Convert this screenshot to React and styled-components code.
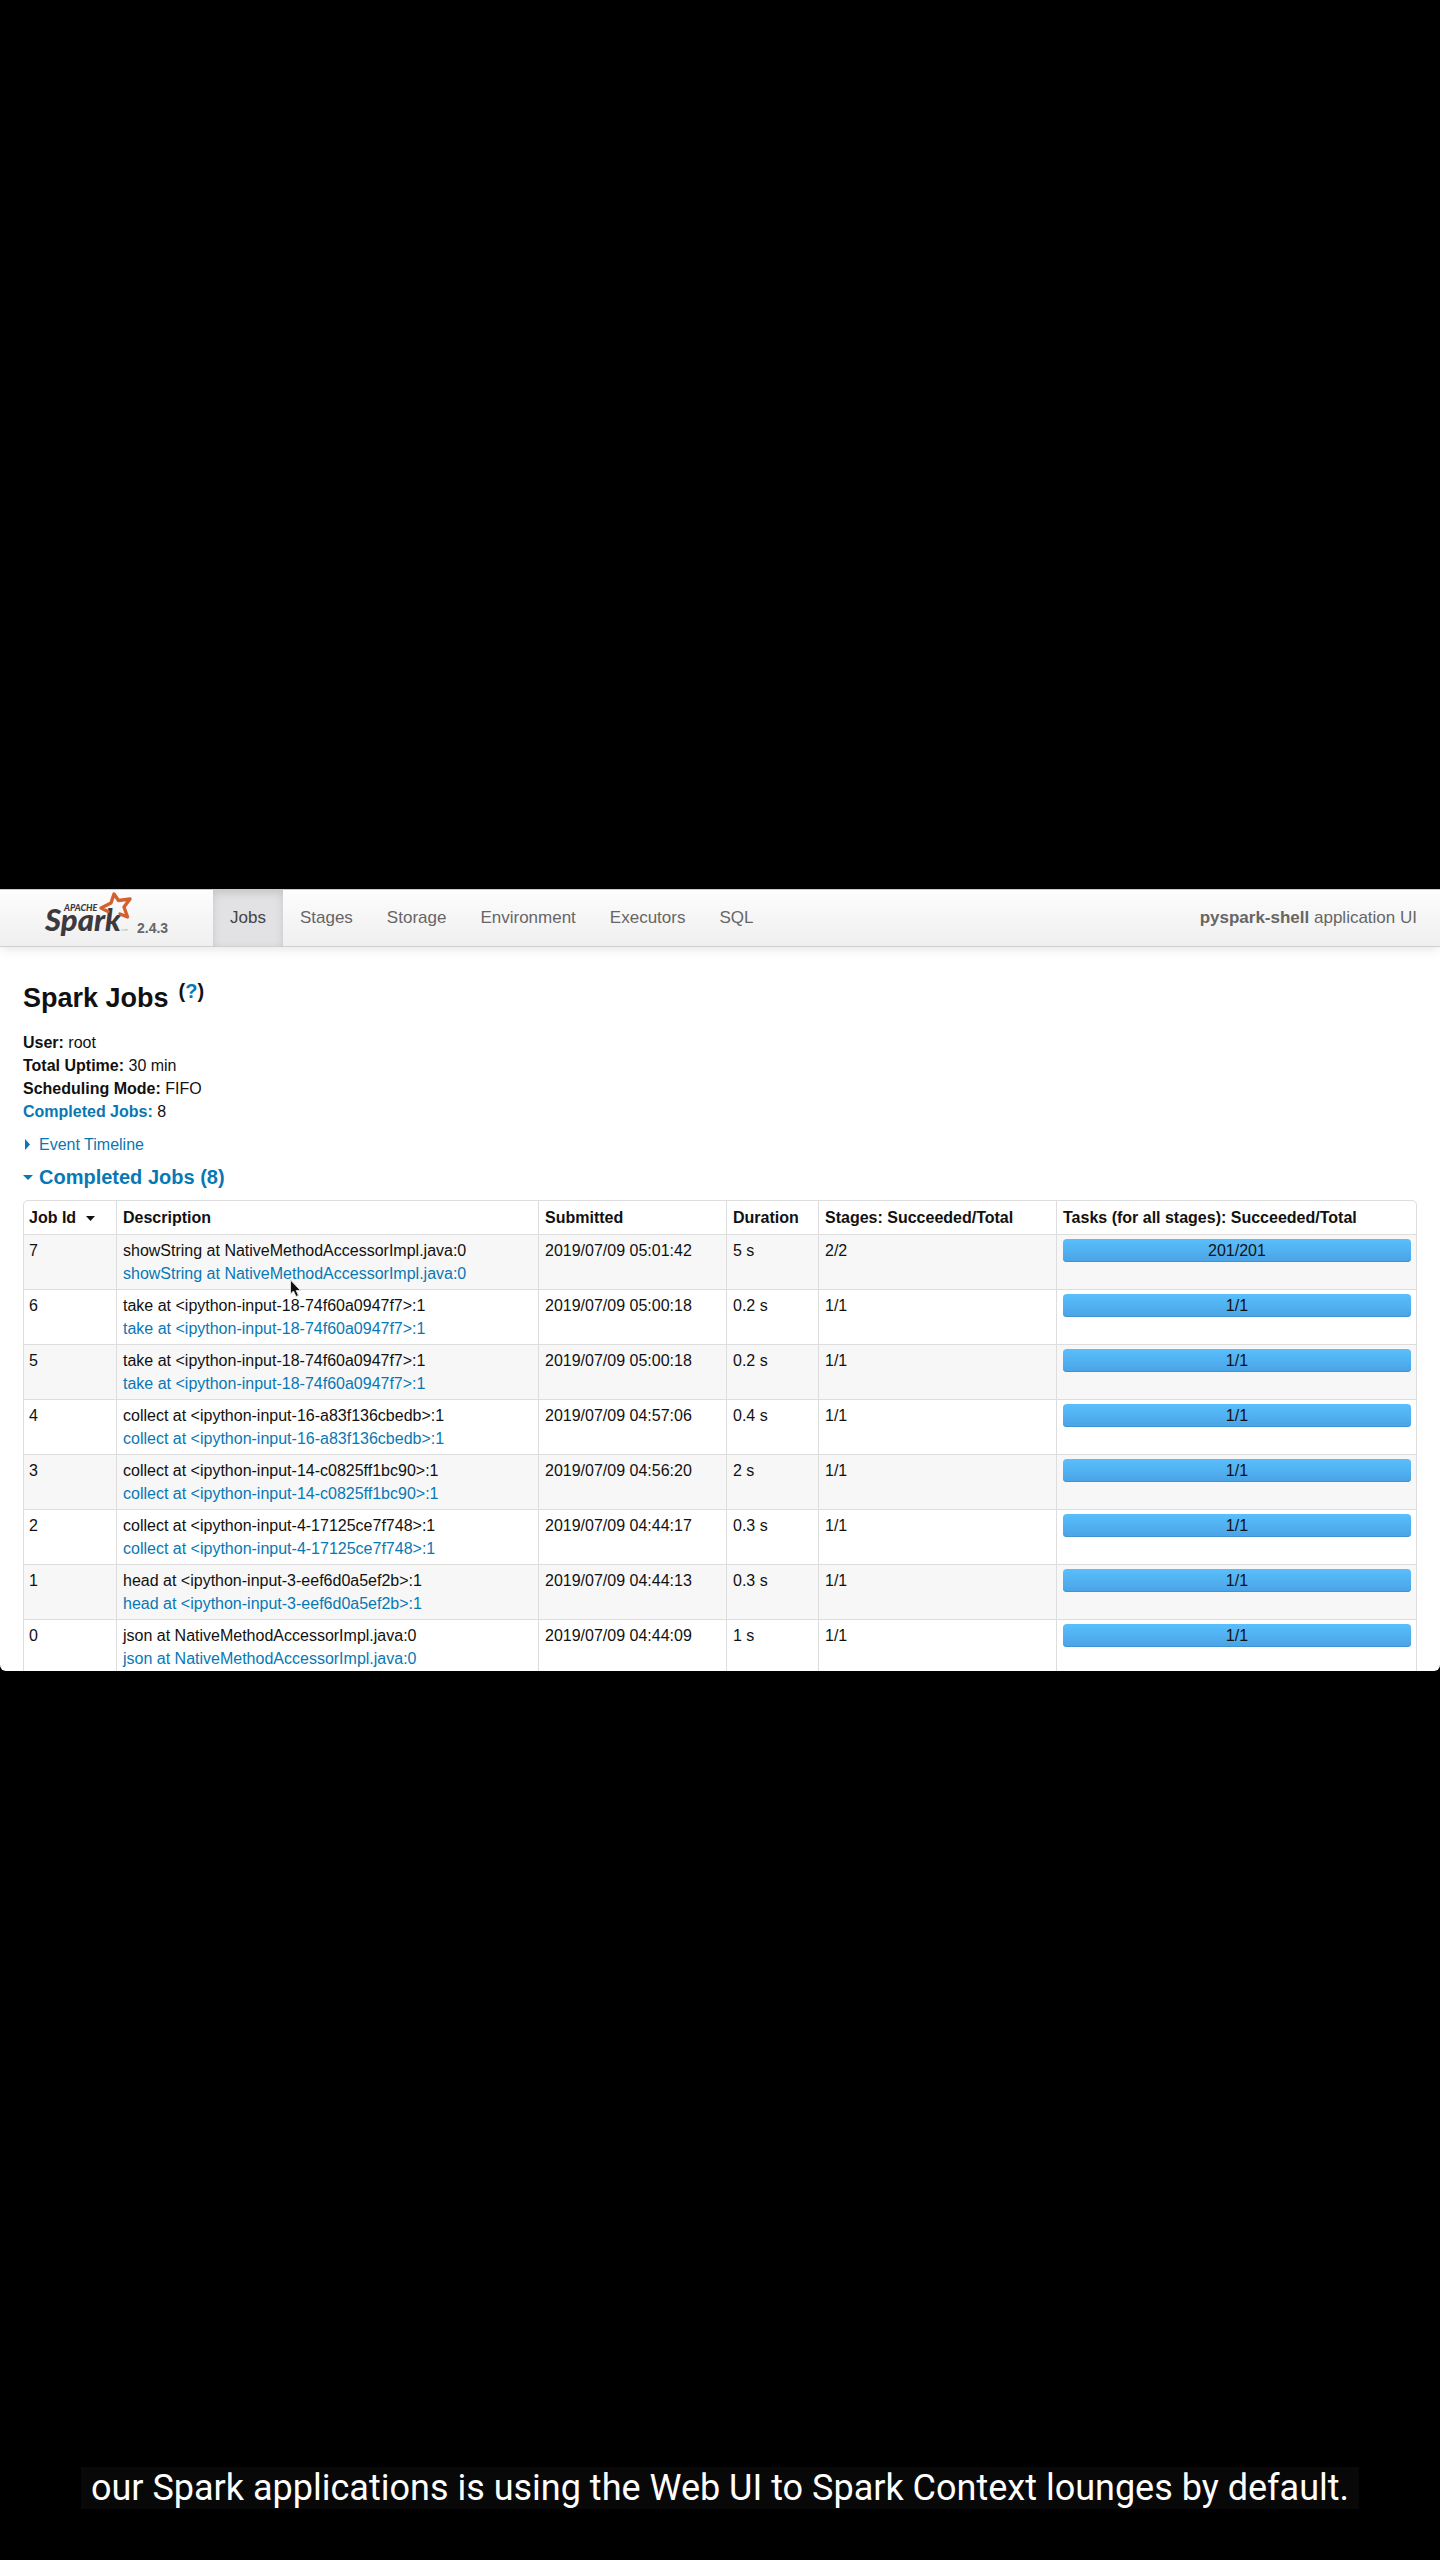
import React from "react";
import styled, { createGlobalStyle } from "styled-components";

const GlobalStyle = createGlobalStyle`
  *, *::before, *::after { box-sizing: border-box; }
  body { margin: 0; background: #000; }
`;

const Player = styled.main`
  position: relative;
  display: flex;
  flex-direction: column;
  justify-content: center;
  min-height: 100vh;
  background: #000;
`;

const Screen = styled.section`
  position: relative;
  width: 100%;
  aspect-ratio: 1440 / 782;
  overflow: hidden;
  border-radius: 0 0 6px 6px;
  background: #fff;
  color: #111;
  font-family: "Liberation Sans", Arial, Helvetica, sans-serif;
  font-size: 16px;
  line-height: 23px;
`;

const Navbar = styled.header`
  display: flex;
  align-items: stretch;
  height: 58px;
  padding-right: 23px;
  border-top: 1px solid #ccc;
  border-bottom: 1px solid #d0d0d0;
  background: linear-gradient(to bottom, #fefdfe, #f0eff0);
  box-shadow: 0 1px 11px rgba(0, 0, 0, 0.12);
  font-size: 17px;
  color: #666;
`;

const Brand = styled.a`
  display: flex;
  align-items: flex-end;
  gap: 3px;
  width: 213px;
  padding: 0 0 9px 44px;
  color: #666;
  text-decoration: none;
`;

const Version = styled.span`
  font-size: 14px;
  font-weight: bold;
  line-height: 18px;
`;

const Nav = styled.nav`
  display: flex;
  flex: 1;
`;

const NavLink = styled.a`
  padding: 16px 17px;
  color: ${(p) => (p.$active ? "#444" : "#666")};
  background: ${(p) => (p.$active ? "#e2e1e3" : "transparent")};
  box-shadow: ${(p) => (p.$active ? "inset 0 3px 8px rgba(0, 0, 0, 0.13)" : "none")};
  text-decoration: none;
`;

const AppName = styled.p`
  margin: 0;
  padding: 16px 0;
`;

const Content = styled.div`
  padding: 29px 23px 0;
`;

const Title = styled.h1`
  display: flex;
  align-items: flex-start;
  gap: 10px;
  margin: 0;
  font-size: 27px;
  line-height: 45px;
`;

const Help = styled.sup`
  font-size: 20px;
  line-height: 30px;
  vertical-align: baseline;
`;

const Link = styled.a`
  color: #0878b4;
  text-decoration: none;
`;

const Summary = styled.ul`
  margin: 10px 0 0;
  padding: 0;
  list-style: none;
`;

const Toggle = styled.a`
  display: flex;
  align-items: center;
  width: max-content;
  color: #0878b4;
  text-decoration: none;
`;

const TimelineRow = styled.div`
  margin-top: 10px;
`;

const Section = styled.h2`
  margin: 11px 0 12px;
  font-size: 20px;
  line-height: 21px;
`;

const ArrowSlot = styled.span`
  display: flex;
  width: 16px;
  padding-left: ${(p) => p.$inset || 0}px;
`;

const JobsTable = styled.table`
  width: 100%;
  table-layout: fixed;
  border: 1px solid #ddd;
  border-radius: 5px;
  border-collapse: separate;
  border-spacing: 0;
`;

const Col = styled.col`
  width: ${(p) => p.$width};
`;

const HeadCell = styled.th`
  padding: 5px;
  text-align: left;
  white-space: nowrap;
  & + & { border-left: 1px solid #ddd; padding-left: 6px; }
`;

const SortArrow = styled.svg`
  margin-left: 10px;
  vertical-align: 2px;
`;

const Row = styled.tr`
  background: ${(p) => (p.$striped ? "#f7f7f8" : "#fff")};
`;

const Cell = styled.td`
  padding: 4px 5px;
  border-top: 1px solid #ddd;
  vertical-align: top;
  white-space: nowrap;
  & + & { border-left: 1px solid #ddd; padding-left: 6px; }
`;

const Job = styled.div`
  display: flex;
  flex-direction: column;
`;

const Bar = styled.div`
  height: 23px;
  border-radius: 4px;
  background: linear-gradient(to bottom, #59bffc, #4aa3e6);
  box-shadow: inset 0 -1px 0 #3f95d3;
  text-align: center;
`;

const Pointer = styled.svg`
  position: absolute;
  left: 289px;
  top: 390px;
`;

const Caption = styled.p`
  position: absolute;
  bottom: 51px;
  left: 50%;
  transform: translateX(-50%);
  margin: 0;
  padding: 0 10px;
  background: #080808;
  color: #fff;
  font-family: Roboto, sans-serif;
  font-size: 36px;
  line-height: 42px;
  white-space: nowrap;
`;

const tabs = ["Jobs", "Stages", "Storage", "Environment", "Executors", "SQL"];

const jobs = [
  { id: 7, name: "showString at NativeMethodAccessorImpl.java:0", at: "2019/07/09 05:01:42", time: "5 s", stages: "2/2", tasks: 201 },
  { id: 6, name: "take at <ipython-input-18-74f60a0947f7>:1", at: "2019/07/09 05:00:18", time: "0.2 s", stages: "1/1", tasks: 1 },
  { id: 5, name: "take at <ipython-input-18-74f60a0947f7>:1", at: "2019/07/09 05:00:18", time: "0.2 s", stages: "1/1", tasks: 1 },
  { id: 4, name: "collect at <ipython-input-16-a83f136cbedb>:1", at: "2019/07/09 04:57:06", time: "0.4 s", stages: "1/1", tasks: 1 },
  { id: 3, name: "collect at <ipython-input-14-c0825ff1bc90>:1", at: "2019/07/09 04:56:20", time: "2 s", stages: "1/1", tasks: 1 },
  { id: 2, name: "collect at <ipython-input-4-17125ce7f748>:1", at: "2019/07/09 04:44:17", time: "0.3 s", stages: "1/1", tasks: 1 },
  { id: 1, name: "head at <ipython-input-3-eef6d0a5ef2b>:1", at: "2019/07/09 04:44:13", time: "0.3 s", stages: "1/1", tasks: 1 },
  { id: 0, name: "json at NativeMethodAccessorImpl.java:0", at: "2019/07/09 04:44:09", time: "1 s", stages: "1/1", tasks: 1 },
];

function SparkLogo() {
  return (
    <svg width="90" height="46" viewBox="0 0 90 46" aria-label="Apache Spark">
      <g fontFamily="Lato, sans-serif" fontStyle="italic" fill="#3c3a3e" fontWeight="900">
        <text x="20" y="20" fontSize="9">APACHE</text>
        <text x="1" y="40" fontSize="31">Spark</text>
      </g>
      <path
        d="M64 20.500 L57 17 L67 12 L70 3 L74.500 9.500 L86 8 L80 16 L83.500 26 L76 23"
        fill="none" stroke="#d2622f" strokeWidth="3.400" strokeLinejoin="round" strokeLinecap="round"
      />
      <path d="M77 39 h3 M81 40 v-2 l1 1 l1 -1 v2" fill="none" stroke="#aaa" strokeWidth="0.6" />
    </svg>
  );
}

export default function App() {
  return (
    <Player>
      <GlobalStyle />
      <Screen>
        <Navbar>
          <Brand href="#home">
            <SparkLogo />
            <Version>2.4.3</Version>
          </Brand>
          <Nav>
            {tabs.map((tab) => (
              <NavLink key={tab} href={`#${tab}`} $active={tab === "Jobs"}>{tab}</NavLink>
            ))}
          </Nav>
          <AppName><strong>pyspark-shell</strong> application UI</AppName>
        </Navbar>
        <Content>
          <Title>
            Spark Jobs
            <Help>(<Link href="#help">?</Link>)</Help>
          </Title>
          <Summary>
            <li><strong>User:</strong> root</li>
            <li><strong>Total Uptime:</strong> 30 min</li>
            <li><strong>Scheduling Mode:</strong> FIFO</li>
            <li><Link href="#completed"><strong>Completed Jobs:</strong></Link> 8</li>
          </Summary>
          <TimelineRow>
            <Toggle href="#timeline">
              <ArrowSlot $inset={2}>
                <svg width="5" height="11" viewBox="0 0 5 11"><path d="M0 0 L5 5.500 L0 11 Z" fill="#0878b4" /></svg>
              </ArrowSlot>
              Event Timeline
            </Toggle>
          </TimelineRow>
          <Section id="completed">
            <Toggle href="#completed">
              <ArrowSlot>
                <svg width="10" height="5" viewBox="0 0 10 5"><path d="M0 0 H10 L5 5 Z" fill="#0878b4" /></svg>
              </ArrowSlot>
              Completed Jobs (8)
            </Toggle>
          </Section>
          <JobsTable>
            <colgroup>
              <Col $width="92px" />
              <Col $width="auto" />
              <Col $width="188px" />
              <Col $width="92px" />
              <Col $width="238px" />
              <Col $width="360px" />
            </colgroup>
            <thead>
              <tr>
                <HeadCell>
                  Job Id
                  <SortArrow width="9" height="5" viewBox="0 0 9 5"><path d="M0 0 H9 L4.500 5 Z" fill="#111" /></SortArrow>
                </HeadCell>
                <HeadCell>Description</HeadCell>
                <HeadCell>Submitted</HeadCell>
                <HeadCell>Duration</HeadCell>
                <HeadCell>Stages: Succeeded/Total</HeadCell>
                <HeadCell>Tasks (for all stages): Succeeded/Total</HeadCell>
              </tr>
            </thead>
            <tbody>
              {jobs.map((job, i) => (
                <Row key={job.id} $striped={i % 2 === 0}>
                  <Cell>{job.id}</Cell>
                  <Cell>
                    <Job>
                      <span>{job.name}</span>
                      <Link href={`#job-${job.id}`}>{job.name}</Link>
                    </Job>
                  </Cell>
                  <Cell>{job.at}</Cell>
                  <Cell>{job.time}</Cell>
                  <Cell>{job.stages}</Cell>
                  <Cell>
                    <Bar role="progressbar" aria-valuenow={job.tasks} aria-valuemax={job.tasks}>
                      {job.tasks}/{job.tasks}
                    </Bar>
                  </Cell>
                </Row>
              ))}
            </tbody>
          </JobsTable>
        </Content>
        <Pointer width="14" height="20" viewBox="0 0 14 20">
          <path d="M1.500 1 V15 L4.500 12 L7 17.500 L9.500 16.500 L7.200 11.500 H11.500 Z" fill="#111" stroke="#ddd" strokeWidth="1" />
        </Pointer>
      </Screen>
      <Caption>our Spark applications is using the Web UI to Spark Context lounges by default.</Caption>
    </Player>
  );
}
